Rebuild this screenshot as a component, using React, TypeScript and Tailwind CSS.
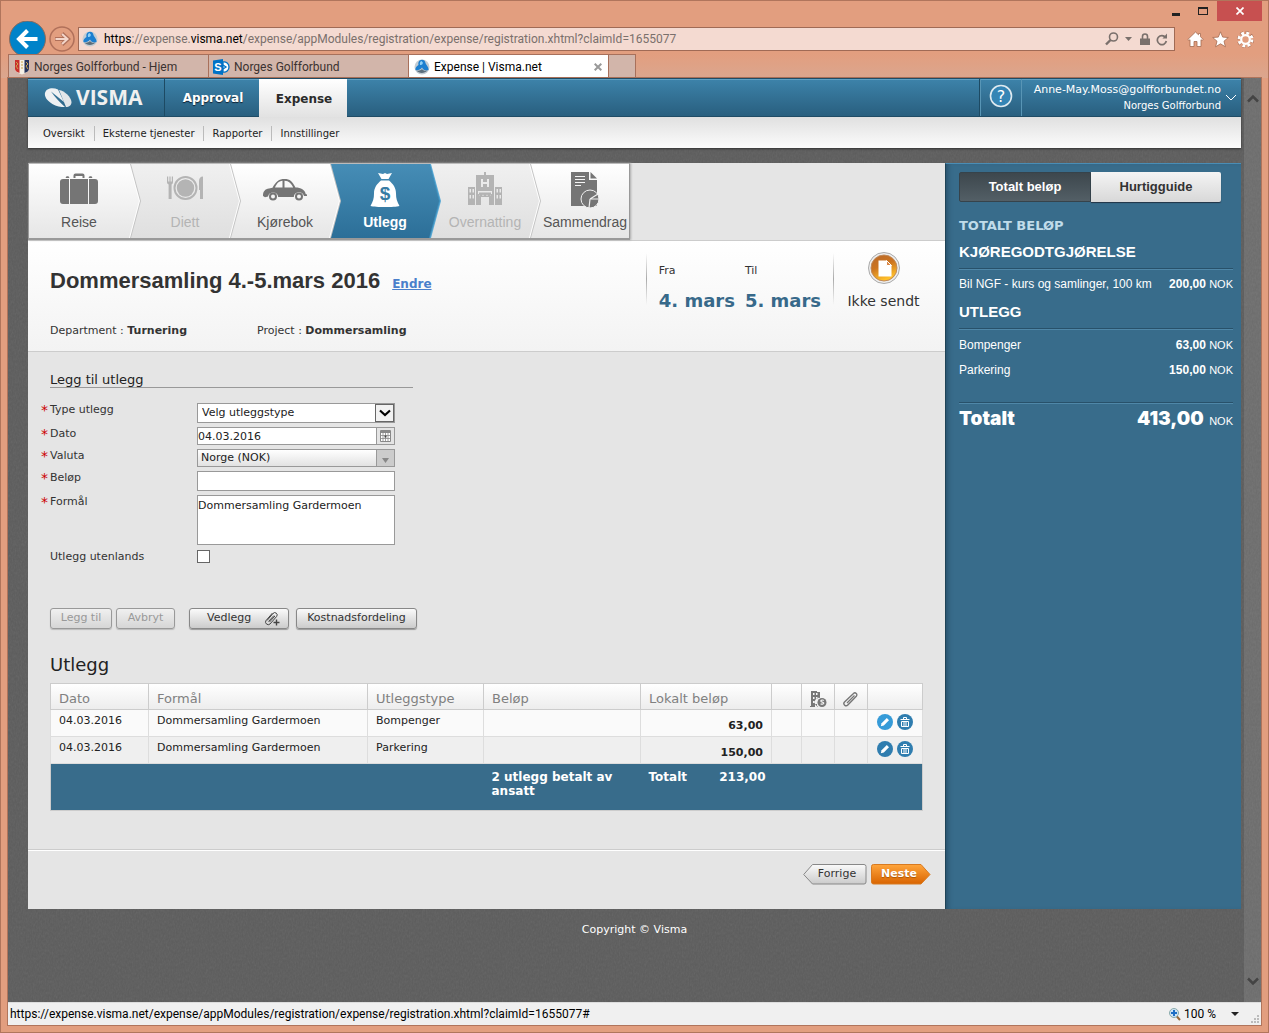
import type { ReactNode } from 'react'
import { clsx } from 'clsx'

type Step = { label: string; state: 'open' | 'off' | 'active'; icon: ReactNode }

const suitcase = (
  <svg width="40" height="36" viewBox="0 0 40 36" fill="currentColor" aria-hidden="true">
    <path d="M14.500 6V3.500a2 2 0 0 1 2-2h7a2 2 0 0 1 2 2V6h-2V4h-7v2z" />
    <path d="M6.500 6l1-1.800h2l1 1.800zM29.500 6l1-1.800h2l1 1.800z" />
    <path d="M4 7h6v25H4a3 3 0 0 1-3-3V10a3 3 0 0 1 3-3zM11 7h18v25H11zM30 7h6a3 3 0 0 1 3 3v19a3 3 0 0 1-3 3h-6z" />
  </svg>
)

const plate = (
  <svg width="40" height="36" viewBox="0 0 40 36" fill="currentColor" aria-hidden="true">
    <path d="M2 4.500h1.200v5h1.200v-5h1.200v5h1.200v-5H8V10c0 1.500-.8 2-1.400 2.500V27h-3V12.500C2.800 12 2 11.500 2 10z" />
    <circle cx="20.500" cy="16" r="11" fill="none" stroke="currentColor" strokeWidth="2" />
    <circle cx="20.500" cy="16" r="8.700" />
    <path d="M38 4.500V27h-3v-9h-1V9c0-2.500 1.500-4.500 4-4.500z" />
  </svg>
)

const car = (
  <svg width="46" height="36" viewBox="0 0 46 36" fill="currentColor" aria-hidden="true">
    <path
      fillRule="evenodd"
      d="M1 23c.2-3.500 2-6 6-6.500l3.500-.8C14 9.500 17 7 22.500 7c5.500 0 8 2.500 11 8.500 5.500 0 9.500 2.500 10.200 6.500L45 22.500V24h-3a5.200 5.200 0 0 0-10.200 1H16.200A5.200 5.200 0 0 0 6 24.500L3 25.200 1 24zM13 15.500h7.500V8.800c-4 .3-5.800 3-7.500 6.700zm9.500 0h8.700c-2-4-4-6.500-8.700-6.700z"
    />
    <circle cx="11" cy="24.500" r="3" fill="none" stroke="currentColor" strokeWidth="2" />
    <circle cx="37" cy="24.500" r="3" fill="none" stroke="currentColor" strokeWidth="2" />
  </svg>
)

const moneyBag = (
  <svg width="30" height="36" viewBox="0 0 30 36" fill="currentColor" aria-hidden="true">
    <path d="M8 1l5 1 2-1 2 1 5-1-3.500 6h-7z" />
    <path d="M11 8.500h8c4 3.500 7 7 7 13 0 5 1 8 3.500 12.500-5 1.400-24 1.400-29 0C3 29.500 4 26.500 4 21.500c0-6 3-9.500 7-13z" />
    <text x="15" y="28" textAnchor="middle" fontSize="19" fontWeight="bold" fill="#377ba4" fontFamily="Liberation Sans, sans-serif">$</text>
  </svg>
)

const hotel = (
  <svg width="36" height="36" viewBox="0 0 36 36" fill="currentColor" aria-hidden="true">
    <path
      fillRule="evenodd"
      d="M17 0h2v3h8v30h-5v-8h-8v8H9V3h8zM14 7v8h2v-3h4v3h2V7h-2v3h-4V7zM11 19v3h1.500v2h11v-2H25v-3z"
    />
    <path fillRule="evenodd" d="M1 15h7v18H1zm1.500 2v3.500H4V17zm3 0v3.500H7V17zm-3 6v3.500H4V23zm3 0v3.500H7V23zM28 15h7v18h-7zm1.500 2v3.500H31V17zm3 0v3.500H34V17zm-3 6v3.500H31V23zm3 0v3.500H34V23z" />
    <path d="M12 20.500h12v1.500a2 2 0 0 1-4 .3 2 2 0 0 1-4 0 2 2 0 0 1-4-.3z" />
  </svg>
)

const report = (
  <svg width="32" height="38" viewBox="0 0 32 38" fill="currentColor" aria-hidden="true">
    <path d="M2 1h18v8h8v26H2z" />
    <path d="M21.500 1l6.500 6.500h-6.500z" />
    <path d="M6 5.500h10M6 8.500h10M6 11.500h10M6 14.500h6" stroke="#f4f4f4" strokeWidth="1.200" />
    <circle cx="21" cy="28" r="9" stroke="#f0f0f0" />
    <path d="M21 28l8-5M21 28h9.500M21 28l-1 9" stroke="#f0f0f0" strokeWidth="1.200" fill="none" />
  </svg>
)

const steps: Step[] = [
  { label: 'Reise', state: 'open', icon: suitcase },
  { label: 'Diett', state: 'off', icon: plate },
  { label: 'Kjørebok', state: 'open', icon: car },
  { label: 'Utlegg', state: 'active', icon: moneyBag },
  { label: 'Overnatting', state: 'off', icon: hotel },
  { label: 'Sammendrag', state: 'open', icon: report },
]

const stackOrder = ['z-[6]', 'z-[5]', 'z-[4]', 'z-[3]', 'z-[2]', 'z-[1]']

const stepColor = {
  open: 'text-[#555]',
  off: 'text-[#b4b4b4]',
  active: 'font-bold text-white',
}

const iconColor = {
  open: 'text-[#757575]',
  off: 'text-[#b4b4b4]',
  active: 'text-white',
}

const rows = [
  { date: '04.03.2016', purpose: 'Dommersamling Gardermoen', type: 'Bompenger', amount: '63,00' },
  { date: '04.03.2016', purpose: 'Dommersamling Gardermoen', type: 'Parkering', amount: '150,00' },
]

function VismaBall() {
  return (
    <svg width="16" height="16" viewBox="0 0 16 16" className="shrink-0" aria-hidden="true">
      <circle cx="8" cy="8" r="7.500" fill="#c3ccd3" />
      <path d="M8 .8C5 1 4 3.500 4.500 6 2.500 7 1 9 1.500 11c2 .8 5-.2 6.500-2.500 1 2.500 4 3.500 6.500 2.500C15 8 12 6 11.500 4 11 2 10 .8 8 .8z" fill="#1c7fd0" />
      <path d="M7.500 2C6 2.500 5.500 4 6 6c2 .4 3-1 2.800-2.500z" fill="#8fd0f7" />
      <path d="M2.500 11.500c2 3 8 3.500 11 0-2.500.8-4.500.2-5.500-1.500-1.300 1.500-3.500 2-5.500 1.500z" fill="#5b6e7c" />
    </svg>
  )
}

function WindowChrome() {
  return (
    <header className="bg-[#e29e7f] font-['Roboto','Noto_Sans',sans-serif] text-xs text-black">
      <div className="flex h-5 items-stretch justify-end pr-1.5">
        <button type="button" aria-label="Minimer" className="flex w-[27px] items-center justify-center">
          <span className="mt-1.5 h-[3px] w-2 bg-[#222]" />
        </button>
        <button type="button" aria-label="Maksimer" className="flex w-7 items-center justify-center">
          <span className="h-2 w-2.5 border border-t-2 border-[#222]" />
        </button>
        <button type="button" aria-label="Lukk" className="flex w-[45px] items-center justify-center bg-[#c75050] text-white">
          <svg width="8" height="8" viewBox="0 0 8 8" aria-hidden="true">
            <path d="M.5 .5l7 7M7.500 .5l-7 7" stroke="currentColor" strokeWidth="1.700" />
          </svg>
        </button>
      </div>

      <div className="flex h-[33px] items-center overflow-hidden pt-[3px] pr-3.5 pl-2">
        <button type="button" aria-label="Tilbake" className="shrink-0">
          <svg width="37" height="37" viewBox="0 0 37 37" className="block" aria-hidden="true">
            <circle cx="18.500" cy="18" r="18" fill="#0083c9" stroke="#8a6a5c" />
            <path d="M28.500 18H10.500M18.500 9.500L10 18l8.500 8.500" fill="none" stroke="#fff" strokeWidth="4" />
          </svg>
        </button>
        <button type="button" aria-label="Frem" className="ml-0.5 shrink-0">
          <svg width="28" height="28" viewBox="0 0 28 28" className="block" aria-hidden="true">
            <circle cx="14" cy="14" r="12" fill="none" stroke="#b0705a" strokeWidth="1.500" />
            <path d="M7 14h12M14 8.500l6 5.500-6 5.500" fill="none" stroke="#b0705a" strokeWidth="4" />
            <path d="M7.500 14h12M14 9l5.500 5-5.500 5" fill="none" stroke="#f3d6ca" strokeWidth="2" />
          </svg>
        </button>
        <div className="ml-0.5 flex h-6 flex-1 items-center border border-[#a06a55] bg-[#f4dad1] pr-1.5 pl-[3px] text-[#7a706c]">
          <VismaBall />
          <span className="ml-1.5 flex-1 whitespace-nowrap">
            <span className="text-black">https</span>://expense.<span className="text-black">visma.net</span>
            /expense/appModules/registration/expense/registration.xhtml?claimId=1655077
          </span>
          <button type="button" aria-label="Søk" className="flex items-center gap-1.5">
            <svg width="14" height="14" viewBox="0 0 14 14" fill="none" stroke="currentColor" aria-hidden="true">
              <circle cx="8.500" cy="5" r="4" strokeWidth="1.600" />
              <path d="M5.500 8L1 12.500" strokeWidth="2.400" />
            </svg>
            <svg width="7" height="4" viewBox="0 0 7 4" fill="currentColor" aria-hidden="true"><path d="M0 0h7L3.500 4z" /></svg>
          </button>
          <svg width="10" height="13" viewBox="0 0 10 13" className="ml-2" aria-hidden="true">
            <path d="M2.500 6V3.500a2.500 2.500 0 0 1 5 0V6" fill="none" stroke="currentColor" strokeWidth="1.600" />
            <path d="M0 5.500h10V12H0z" fill="currentColor" />
          </svg>
          <button type="button" aria-label="Oppdater" className="ml-1.5">
            <svg width="12" height="13" viewBox="0 0 12 13" aria-hidden="true">
              <path d="M9.500 4.500A4.500 4.500 0 1 0 10.300 8" fill="none" stroke="currentColor" strokeWidth="1.700" />
              <path d="M6.500 5.500h4.500V.5z" fill="currentColor" />
            </svg>
          </button>
        </div>
        <div className="ml-3 flex items-center gap-2 text-white">
          <button type="button" aria-label="Hjem">
            <svg width="17" height="17" viewBox="0 0 17 17" className="block" aria-hidden="true">
              <path d="M8.500 1L.8 8.500l1.200 1 1-.8V15.500h4v-5h3v5h4V8.700l1 .8 1.200-1L13.500 5.700V2.500h-2v1.300z" fill="#fff" stroke="#a5694f" strokeWidth=".8" />
            </svg>
          </button>
          <button type="button" aria-label="Favoritter">
            <svg width="17" height="17" viewBox="0 0 17 17" className="block" aria-hidden="true">
              <path d="M8.500 .8l2.200 5.300 5.600.4-4.300 3.700 1.400 5.600-4.900-3-4.900 3L5 10.200.7 6.500l5.600-.4z" fill="#fff" stroke="#a5694f" strokeWidth=".8" />
            </svg>
          </button>
          <button type="button" aria-label="Verktøy">
            <svg width="17" height="17" viewBox="0 0 17 17" className="block" aria-hidden="true">
              <circle cx="8.500" cy="8.500" r="6.700" fill="none" stroke="#a5694f" strokeWidth="3.600" strokeDasharray="3 2.260" />
              <circle cx="8.500" cy="8.500" r="6.500" fill="none" stroke="#fff" strokeWidth="3" strokeDasharray="2.800 2.300" />
              <circle cx="8.500" cy="8.500" r="4.300" fill="none" stroke="#fff" strokeWidth="2.200" />
            </svg>
          </button>
        </div>
      </div>

      <div className="flex h-6 items-stretch bg-linear-to-b from-[#e29e7f] to-[#dba68e] pl-[7px] text-[#3b3230]">
        <a href="#hjem" className="flex w-[201px] items-center gap-1 border border-b-0 border-[#a8705b] bg-[#d2b5aa] pl-[5px]">
          <svg width="16" height="16" viewBox="0 0 16 16" className="shrink-0" aria-hidden="true">
            <path d="M1 1h14v9c0 3-4 4-7 5.500C5 14 1 13 1 10z" fill="#f5f0e6" />
            <path d="M1 1h4.500v13C3 13 1 12 1 10z" fill="#c9302c" />
            <path d="M10.500 1H15v9c0 2-2 3-4.500 4z" fill="#27335c" />
            <path d="M2 3l2 2-2 2 2 3M12 3l2 2-2 2 2 3M7 3h2M7 6h2M7 9h2" stroke="#c9a24a" fill="none" />
          </svg>
          Norges Golfforbund - Hjem
        </a>
        <a href="#forbund" className="flex w-[199px] items-center gap-1 border-t border-[#a8705b] bg-[#d2b5aa] pl-1">
          <svg width="17" height="16" viewBox="0 0 17 16" className="shrink-0" aria-hidden="true">
            <path d="M10 3a5 5 0 0 1 6 5 5 5 0 0 1-6 5z" fill="#fff" stroke="#0072c6" strokeWidth="1.300" />
            <path d="M10 6l3 2-3 2" fill="none" stroke="#0072c6" strokeWidth="1.300" />
            <path d="M0 1.500L10 0v16L0 14.500z" fill="#0072c6" />
            <text x="5" y="12" textAnchor="middle" fontSize="11" fontWeight="bold" fill="#fff" fontFamily="Liberation Sans, sans-serif">S</text>
          </svg>
          Norges Golfforbund
        </a>
        <a href="#expense" className="flex w-[201px] items-center gap-1 border border-b-0 border-[#a8705b] bg-white pr-1.5 pl-[5px] text-black">
          <VismaBall />
          <span className="flex-1">Expense | Visma.net</span>
          <svg width="8" height="8" viewBox="0 0 8 8" aria-hidden="true">
            <path d="M.7 .7l6.600 6.600M7.300 .7L.7 7.300" stroke="#999" strokeWidth="2" />
          </svg>
        </a>
        <button type="button" aria-label="Ny fane" className="w-[27px] border border-b-0 border-l-0 border-[#a8705b] bg-[#d2b5aa]" />
      </div>
    </header>
  )
}

function TopNav() {
  return (
    <div className="shadow-[0_1px_2px_#333]">
      <nav className="flex h-[39px] items-stretch border-t border-b border-[#1f4c66] bg-linear-to-b from-[#3d83aa] to-[#295f7f] text-white shadow-[inset_0_1px_0_#5fa0c2]">
        <a href="#start" aria-label="Visma" className="flex w-[137px] items-center gap-0.5 border-r border-[#1d4a63] pl-4 text-[#f0f0f0]">
          <svg width="30" height="24" viewBox="0 0 30 24" className="shrink-0" aria-hidden="true">
            <path d="M1 7C2 2 9 1 14 3.500L20 16 7 5.500c4 6 9 11 14 15.500C12 22-.5 14 1 7z" fill="#eef1f3" />
            <path d="M15 4c6 1 12 7 12.500 12 .2 3-2.500 5-5.500 5z" fill="#e2e6e9" />
          </svg>
          <span className="font-['Open_Sans',sans-serif] text-[21px] leading-none font-bold">VISMA</span>
        </a>
        <a href="#approval" className="flex w-[94px] items-center justify-center pt-px pl-0.5 text-xs font-bold [text-shadow:0_1px_1px_#123]">Approval</a>
        <a href="#expense" className="-mb-px flex w-[88px] items-center justify-center bg-linear-to-b from-white to-[#e2e2e2] pt-0.5 pl-0.5 text-xs font-bold text-[#2b2b2b]">Expense</a>
        <div className="flex-1" />
        <button type="button" aria-label="Hjelp" className="flex w-[42px] items-center justify-center border-x border-[#5895b5] shadow-[-1px_0_0_#1d4a63]">
          <svg width="24" height="24" viewBox="0 0 24 24" className="mb-1" aria-hidden="true">
            <circle cx="12" cy="12" r="10.500" fill="#3585b5" stroke="#dfeaf0" strokeWidth="1.600" />
            <text x="12" y="18" textAnchor="middle" fontSize="16" fill="#fff" fontFamily="DejaVu Sans, sans-serif">?</text>
          </svg>
        </button>
        <button type="button" className="flex items-center gap-1 pr-1 pl-3">
          <span className="flex flex-col text-right">
            <span className="text-[11px] leading-[17px]">Anne-May.Moss@golfforbundet.no</span>
            <span className="text-[10px] leading-4">Norges Golfforbund</span>
          </span>
          <svg width="12" height="8" viewBox="0 0 12 8" aria-hidden="true">
            <path d="M1 1l5 5 5-5" fill="none" stroke="#fff" />
          </svg>
        </button>
      </nav>
      <nav className="flex h-[31px] items-center divide-x divide-[#bbb] bg-linear-to-b from-[#e0e0e0] to-[#fcfcfc] pt-0.5 pl-1.5 text-[10px] text-[#222]">
        <a href="#oversikt" className="px-[9px]">Oversikt</a>
        <a href="#tjenester" className="px-2">Eksterne tjenester</a>
        <a href="#rapporter" className="px-[9px]">Rapporter</a>
        <a href="#innstillinger" className="px-2">Innstillinger</a>
      </nav>
    </div>
  )
}

function StepBar() {
  return (
    <div className="flex border-b border-[#ccc]">
      <ol className="flex h-[77px] border border-b-2 border-[#999] border-t-[#bbb] shadow-[1px_0_2px_#aaa]">
        {steps.map((step, i) => {
          const last = i === steps.length - 1
          return (
            <li key={step.label} className={clsx('relative w-[100px]', stackOrder[i])}>
              <svg
                width={last ? 100 : 112}
                height="74"
                viewBox={last ? '0 0 100 74' : '0 0 112 74'}
                className="absolute top-0 left-0"
                aria-hidden="true"
              >
                <defs>
                  <linearGradient id={`step${i}`} x1="0" y1="0" x2="0" y2="1">
                    <stop offset="0" stopColor={step.state === 'active' ? '#468db6' : step.state === 'off' ? '#f0f0f0' : '#ffffff'} />
                    <stop offset="1" stopColor={step.state === 'active' ? '#2c6f98' : step.state === 'off' ? '#dfdfdf' : '#e6e6e6'} />
                  </linearGradient>
                </defs>
                {last ? (
                  <path d="M0 0H100V74H0z" fill={`url(#step${i})`} />
                ) : (
                  <>
                    <path d="M0 0H102L112 37L102 74H0z" fill={step.state === 'active' ? '#5aa9d4' : '#c4c4c4'} />
                    <path d="M0 0H101L111 37L101 74H0z" fill={step.state === 'active' ? '#3d8ebb' : '#fff'} />
                    <path d="M0 0H100L110 37L100 74H0z" fill={`url(#step${i})`} />
                  </>
                )}
              </svg>
              <a href={`#${step.label}`} className={clsx('relative flex h-full flex-col items-center font-["Liberation_Sans",Arial,sans-serif] text-sm', i > 0 && 'pl-3', stepColor[step.state])}>
                <span className={clsx('flex h-12 items-center pt-1', iconColor[step.state])}>{step.icon}</span>
                <span className="leading-5">{step.label}</span>
              </a>
            </li>
          )
        })}
      </ol>
    </div>
  )
}

function ClaimHeader() {
  return (
    <section className="flex h-[111px] items-start justify-between border-b border-[#ccc] bg-linear-to-b from-white to-[#f3f3f3] pr-6 pl-[22px]">
      <div className="pt-[26px]">
        <div className="flex items-baseline gap-3">
          <h1 className="font-['Liberation_Sans',Arial,sans-serif] text-[22px] leading-7 font-bold text-[#333]">Dommersamling 4.-5.mars 2016</h1>
          <a href="#endre" className="text-xs font-bold text-[#4a7fcb] underline">Endre</a>
        </div>
        <div className="mt-7 flex text-[11px] text-[#333]">
          <p className="w-[207px]">Department : <b>Turnering</b></p>
          <p>Project : <b>Dommersamling</b></p>
        </div>
      </div>
      <div className="flex">
        <div className="mt-3 h-[52px] w-px bg-linear-to-b from-transparent via-[#aaa] to-transparent" />
        <dl className="flex gap-2.5 px-3 pt-5 text-[11px] text-[#333]">
          <div>
            <dt className="leading-5">Fra</dt>
            <dd className="mt-1.5 text-lg leading-7 font-bold text-[#37698a]">4. mars</dd>
          </div>
          <div>
            <dt className="leading-5">Til</dt>
            <dd className="mt-1.5 text-lg leading-7 font-bold text-[#37698a]">5. mars</dd>
          </div>
        </dl>
        <div className="mt-3 h-[52px] w-px bg-linear-to-b from-transparent via-[#aaa] to-transparent" />
        <div className="ml-3 flex w-[75px] flex-col items-center pt-2.5">
          <svg width="34" height="34" viewBox="0 0 34 34" aria-hidden="true">
            <defs>
              <linearGradient id="status" x1="0" y1="0" x2=".4" y2="1">
                <stop offset="0" stopColor="#b8692b" />
                <stop offset=".5" stopColor="#cc7420" />
                <stop offset="1" stopColor="#ffc02a" />
              </linearGradient>
            </defs>
            <circle cx="17" cy="17" r="15.500" fill="#eee" stroke="#aaa" />
            <circle cx="17" cy="17" r="13" fill="url(#status)" stroke="#c0895a" />
            <path d="M11.500 9.500h8l5 5v11h-13z" fill="#fff" />
            <path d="M19.500 9.500v5h5z" fill="#d9894a" stroke="#fff" />
          </svg>
          <p className="mt-1.5 text-sm text-[#333]">Ikke sendt</p>
        </div>
      </div>
    </section>
  )
}

function Label({ htmlFor, required, children }: { htmlFor: string; required?: boolean; children: ReactNode }) {
  return (
    <label htmlFor={htmlFor} className="flex w-[156px] shrink-0 pt-px leading-3">
      <span className="w-[9px] text-sm leading-3 text-[#c00]">{required && '*'}</span>
      {children}
    </label>
  )
}

const field = 'w-[198px] rounded-none border border-[#999] bg-white text-[11px] text-[#222]'

function ExpenseForm() {
  return (
    <form className="pt-5 pl-[22px] text-[11px] text-[#333]">
      <h2 className="w-[363px] border-b border-[#999] text-[13px] leading-[15px] text-[#222]">Legg til utlegg</h2>

      <div className="mt-[15px] -ml-[9px] flex flex-col">
        <div className="flex h-6">
          <Label htmlFor="type" required>Type utlegg</Label>
          <div className="relative">
            <select id="type" className={clsx(field, 'h-5 appearance-none pl-1')}>
              <option>Velg utleggstype</option>
            </select>
            <span className="pointer-events-none absolute top-px right-px flex h-[18px] w-[19px] items-center justify-center border border-[#666] bg-[#f2f2f2]">
              <svg width="12" height="8" viewBox="0 0 12 8" aria-hidden="true">
                <path d="M1 1.500l5 4.500 5-4.500" fill="none" stroke="#000" strokeWidth="2.200" />
              </svg>
            </span>
          </div>
        </div>
        <div className="flex h-[22px]">
          <Label htmlFor="dato" required>Dato</Label>
          <div className="relative">
            <input id="dato" type="text" defaultValue="04.03.2016" className={clsx(field, 'h-[18px]')} />
            <button type="button" aria-label="Velg dato" className="absolute top-px right-px flex h-4 w-[18px] items-center justify-center border-l border-[#999] bg-[#e4e4e4]">
              <svg width="11" height="12" viewBox="0 0 11 12" aria-hidden="true">
                <path d="M.5 .5h10v11H.5z" fill="#fff" stroke="#888" />
                <path d="M0 2h11" stroke="#888" strokeWidth="2" />
                <path d="M3 3v8M5.500 3v8M8 3v8M1 5.500h9M1 8.500h9" stroke="#888" strokeWidth=".8" />
                <path d="M4.500 5.500h2v2h-2z" fill="#444" />
              </svg>
            </button>
          </div>
        </div>
        <div className="flex h-[22px]">
          <Label htmlFor="valuta" required>Valuta</Label>
          <div className="relative">
            <select id="valuta" className={clsx(field, 'h-[18px] appearance-none bg-linear-to-b from-white to-[#e2e2e2] pl-[3px]')}>
              <option>Norge (NOK)</option>
            </select>
            <span className="pointer-events-none absolute top-px right-px flex h-4 w-[18px] items-end justify-center border-l border-[#999] bg-[#ccc] pb-[3px]">
              <svg width="7" height="5" viewBox="0 0 7 5" aria-hidden="true"><path d="M0 0h7L3.500 5z" fill="#888" /></svg>
            </span>
          </div>
        </div>
        <div className="flex h-6">
          <Label htmlFor="belop" required>Beløp</Label>
          <input id="belop" type="text" className={clsx(field, 'h-5')} />
        </div>
        <div className="flex h-[55px]">
          <Label htmlFor="formal" required>Formål</Label>
          <textarea id="formal" defaultValue="Dommersamling Gardermoen" className={clsx(field, 'h-[50px] resize-none pt-0.5 leading-[15px]')} />
        </div>
        <div className="flex">
          <Label htmlFor="utenlands">Utlegg utenlands</Label>
          <input id="utenlands" type="checkbox" className="size-[13px] appearance-none border border-[#666] bg-white" />
        </div>
      </div>

      <div className="mt-[45px] flex text-[#333]">
        <button type="button" disabled className="h-[21px] w-[62px] rounded-[3px] border border-[#999] bg-linear-to-b from-[#f0f0f0] to-[#d6d6d6] text-[#999] shadow-[0_1px_1px_#bbb]">Legg til</button>
        <button type="button" disabled className="ml-1 h-[21px] w-[59px] rounded-[3px] border border-[#999] bg-linear-to-b from-[#f0f0f0] to-[#d6d6d6] text-[#999] shadow-[0_1px_1px_#bbb]">Avbryt</button>
        <button type="button" className="ml-3.5 flex h-[21px] w-[100px] items-center justify-between rounded-[3px] border border-[#888] bg-linear-to-b from-[#fafafa] to-[#ccc] pr-[7px] pl-[17px] shadow-[0_1px_1px_#999]">
          Vedlegg
          <svg width="17" height="15" viewBox="0 0 17 15" fill="none" stroke="#444" aria-hidden="true">
            <path d="M3 9.500L9 2.500a2.300 2.300 0 0 1 3.600 3L6 13a2.700 2.700 0 0 1-4.200-3.200L8.500 2M4.500 10.500L10 4.500M5.500 11L11 5" />
            <path d="M12.500 8.500v6M9.500 11.500h6" strokeWidth="1.400" />
          </svg>
        </button>
        <button type="button" className="ml-[7px] h-[21px] w-[121px] rounded-[3px] border border-[#888] bg-linear-to-b from-[#fafafa] to-[#ccc] shadow-[0_1px_1px_#999]">Kostnadsfordeling</button>
      </div>
    </form>
  )
}

function RowActions({ lit, date }: { lit: boolean; date: string }) {
  return (
    <div className="flex gap-1 pt-1">
      <button type="button" aria-label={`Rediger ${date}`}>
        <svg width="16" height="16" viewBox="0 0 16 16" className="block" aria-hidden="true">
          <circle cx="8" cy="8" r="8" fill={lit ? '#369bd8' : '#2f7daf'} />
          <path d="M3.800 12.200l.8-3L9.800 4l2.200 2.200-5.200 5.200z" fill="#fff" />
        </svg>
      </button>
      <button type="button" aria-label={`Slett ${date}`}>
        <svg width="16" height="16" viewBox="0 0 16 16" className="block" aria-hidden="true">
          <circle cx="8" cy="8" r="8" fill="#2f7daf" />
          <path d="M3.500 5.500h9M6.500 5V3.500h3V5M4.500 7.500h7v5h-7zM7 7.500v5M9 7.500v5" fill="none" stroke="#fff" />
        </svg>
      </button>
    </div>
  )
}

function ExpenseTable() {
  return (
    <section className="px-[22px] pt-6 pb-[38px]">
      <h2 className="text-lg leading-6 text-[#222]">Utlegg</h2>
      <table className="mt-1.5 w-full table-fixed border-collapse border border-[#ccc] text-left text-[11px] leading-[14px] text-[#222]">
        <colgroup>
          <col className="w-[98px]" />
          <col />
          <col className="w-[116px]" />
          <col className="w-[157px]" />
          <col className="w-[131px]" />
          <col className="w-[30px]" />
          <col className="w-[33px]" />
          <col className="w-[33px]" />
          <col className="w-[55px]" />
        </colgroup>
        <thead>
          <tr className="h-[26px] bg-linear-to-b from-white to-[#ececec] text-[13px] text-[#808080] [&>th]:border [&>th]:border-[#ccc] [&>th]:pt-[5px] [&>th]:pl-2 [&>th]:font-normal">
            <th>Dato</th>
            <th>Formål</th>
            <th>Utleggstype</th>
            <th>Beløp</th>
            <th>Lokalt beløp</th>
            <th />
            <th>
              <svg width="17" height="17" viewBox="0 0 17 17" className="block" role="img" aria-label="Kostnadsfordeling">
                <path fillRule="evenodd" d="M1 0h6v1h3v6a4 4 0 0 0-2 8.500V16H7v-3H5v3H0v-1h1zM3 2v2h1.500V2zm3 0v2h1.500V2zM3 6v2h1.500V6zm3 0v2h1.500V6zM3 10v2h1.500v-2z" fill="#777" />
                <circle cx="12" cy="11.500" r="4.500" fill="#777" />
                <path d="M13.800 9.500c-1-.8-3-.6-3 .6s3 .8 3 2-2 1.400-3.200.6" fill="none" stroke="#f2f2f2" strokeWidth="1.200" />
              </svg>
            </th>
            <th>
              <svg width="15" height="15" viewBox="0 0 15 15" fill="none" stroke="#777" className="block" role="img" aria-label="Vedlegg">
                <path d="M1.500 10L10.500 1.500a1.900 1.900 0 0 1 2.800 2.700L4.800 13a2 2 0 0 1-3.300-3z" strokeWidth="1.400" />
                <path d="M4 11L11.500 3.500" strokeWidth="1.300" />
              </svg>
            </th>
            <th />
          </tr>
        </thead>
        <tbody>
          {rows.map((row, i) => (
            <tr
              key={row.type}
              className={clsx('h-[27px] align-top [&>td]:border [&>td]:border-[#ddd] [&>td]:pt-1 [&>td]:pl-2', i % 2 ? 'bg-[#efefef]' : 'bg-[#fafafa]')}
            >
              <td>{row.date}</td>
              <td>{row.purpose}</td>
              <td>{row.type}</td>
              <td />
              <td className="pr-2 text-right font-bold"><span className="block pt-[5px]">{row.amount}</span></td>
              <td />
              <td />
              <td />
              <td className="pt-0! pl-[9px]!"><RowActions lit={i === 0} date={row.date} /></td>
            </tr>
          ))}
        </tbody>
        <tfoot>
          <tr className="h-[47px] bg-[#386c8b] align-top text-xs leading-[14px] font-bold text-white [&>td]:pt-1.5 [&>td]:pl-2">
            <td colSpan={3} />
            <td>2 utlegg betalt av ansatt</td>
            <td>
              <span className="flex justify-between pr-1.5"><span>Totalt</span><span>213,00</span></span>
            </td>
            <td colSpan={4} />
          </tr>
        </tfoot>
      </table>
    </section>
  )
}

function PagerButtons() {
  return (
    <div className="flex gap-1 border-t border-[#ccc] pt-[13px] pr-3.5 pb-6 text-[11px] shadow-[inset_0_1px_0_#fff]">
      <button type="button" className="relative ml-auto h-[22px] w-16 pl-1 text-[#333]">
        <svg width="64" height="23" viewBox="0 0 64 23" className="absolute inset-0" aria-hidden="true">
          <defs>
            <linearGradient id="prev" x1="0" y1="0" x2="0" y2="1">
              <stop offset="0" stopColor="#fafafa" />
              <stop offset="1" stopColor="#cbcbcb" />
            </linearGradient>
          </defs>
          <path d="M9.500 1.500H61a2 2 0 0 1 2 2V19a2 2 0 0 1-2 2H9.500L.7 11.500z" fill="url(#prev)" stroke="#888" />
        </svg>
        <span className="relative">Forrige</span>
      </button>
      <button type="button" className="relative h-[22px] w-[60px] pr-1 font-bold text-white [text-shadow:0_1px_1px_#a50]">
        <svg width="60" height="23" viewBox="0 0 60 23" className="absolute inset-0" aria-hidden="true">
          <defs>
            <linearGradient id="next" x1="0" y1="0" x2="0" y2="1">
              <stop offset="0" stopColor="#ffa53c" />
              <stop offset="1" stopColor="#d96400" />
            </linearGradient>
          </defs>
          <path d="M2.500 1.500H50l9 10L50 21H2.500a2 2 0 0 1-2-2V3.500a2 2 0 0 1 2-2z" fill="url(#next)" stroke="#d87a20" />
        </svg>
        <span className="relative">Neste</span>
      </button>
    </div>
  )
}

function Amount({ value }: { value: string }) {
  return (
    <span className="shrink-0 whitespace-nowrap">
      <b>{value}</b> <span className="text-[11px]">NOK</span>
    </span>
  )
}

function TotalsPanel() {
  return (
    <aside className="w-[296px] shrink-0 border-t border-t-[#4a8db5] border-l border-l-[#1f4356] bg-[#386c8b] pr-2 pl-[13px] font-['Liberation_Sans',Arial,sans-serif] text-xs text-white shadow-[inset_5px_0_5px_-3px_#28506a]">
      <div role="tablist" className="mt-2 mr-3 flex h-[30px] text-[13px] font-bold">
        <button type="button" role="tab" aria-selected="true" className="flex-1 rounded-l-xs border border-[#36434b] bg-linear-to-b from-[#3d474d] to-[#535f66]">Totalt beløp</button>
        <button type="button" role="tab" aria-selected="false" className="flex-1 rounded-r-xs bg-linear-to-b from-[#f4f4f4] to-[#d8d8d8] text-[#333] shadow-[0_1px_1px_#234]">Hurtigguide</button>
      </div>
      <h2 className="mt-4 font-['DejaVu_Sans',Verdana,sans-serif] text-[13px] leading-4 font-bold text-[#c0dcea]">TOTALT BELØP</h2>
      <h3 className="mt-[9px] border-b border-[#28516a] pb-[7px] text-[15px] leading-[18px] font-bold shadow-[0_1px_0_#4f87a8]">KJØREGODTGJØRELSE</h3>
      <div className="flex justify-between pt-[7px] leading-4">
        <span>Bil NGF - kurs og samlinger, 100 km</span>
        <Amount value="200,00" />
      </div>
      <h3 className="mt-[11px] border-b border-[#28516a] pb-[7px] text-[15px] leading-[18px] font-bold shadow-[0_1px_0_#4f87a8]">UTLEGG</h3>
      <div className="flex justify-between pt-2 leading-4">
        <span>Bompenger</span>
        <Amount value="63,00" />
      </div>
      <div className="flex justify-between border-b border-[#28516a] pt-[9px] pb-6 leading-4 shadow-[0_1px_0_#4f87a8]">
        <span>Parkering</span>
        <Amount value="150,00" />
      </div>
      <div className="flex items-baseline justify-between pt-1">
        <span className="font-['Inter',sans-serif] text-[19px] leading-6 font-black">Totalt</span>
        <span className="whitespace-nowrap">
          <span className="mr-0.5 font-['Inter',sans-serif] text-[19px] leading-6 font-black">413,00</span> <span className="text-[11px]">NOK</span>
        </span>
      </div>
    </aside>
  )
}

export default function App() {
  return (
    <div className="flex min-h-screen flex-col border border-[#b0755c] bg-[#e29e7f] pb-1.5 font-['DejaVu_Sans',Verdana,sans-serif]">
      <WindowChrome />

      <div className="mx-1.5 -mt-px flex flex-1 flex-col border border-[#b0755c]">
        <div className="relative isolate flex flex-1 bg-[#5c5c5c]">
          <svg className="absolute inset-0 -z-10 size-full opacity-10" aria-hidden="true">
            <filter id="grain">
              <feTurbulence type="fractalNoise" baseFrequency="0.7 0.35" numOctaves="2" />
              <feColorMatrix type="saturate" values="0" />
            </filter>
            <rect width="100%" height="100%" filter="url(#grain)" />
          </svg>

          <div className="min-w-0 flex-1 pr-[3px] pl-5">
            <TopNav />
            <main className="mt-[15px] flex">
              <div className="min-w-0 flex-1 bg-[#e5e5e5]">
                <StepBar />
                <ClaimHeader />
                <ExpenseForm />
                <ExpenseTable />
                <PagerButtons />
              </div>
              <TotalsPanel />
            </main>
            <footer className="py-3 text-center text-[11px] leading-[18px] text-white">Copyright © Visma</footer>
          </div>

          <div className="flex w-[17px] shrink-0 flex-col items-center justify-between bg-white/10 py-4 text-[#444]">
            <svg width="12" height="9" viewBox="0 0 12 9" aria-hidden="true">
              <path d="M1 7.500l5-5 5 5" fill="none" stroke="currentColor" strokeWidth="2.500" />
            </svg>
            <svg width="12" height="9" viewBox="0 0 12 9" aria-hidden="true">
              <path d="M1 1.500l5 5 5-5" fill="none" stroke="currentColor" strokeWidth="2.500" />
            </svg>
          </div>
        </div>

        <div className="flex h-[23px] items-center border-t border-[#ddd] bg-[#f0f0f0] px-0.5 font-['Roboto','Noto_Sans',sans-serif] text-xs text-black">
          <span className="flex-1">https://expense.visma.net/expense/appModules/registration/expense/registration.xhtml?claimId=1655077#</span>
          <button type="button" className="flex items-center gap-[3px]">
            <svg width="12" height="13" viewBox="0 0 12 13" aria-hidden="true">
              <path d="M7.500 8l3.500 4" stroke="#9a6a3a" strokeWidth="2" />
              <circle cx="5" cy="5" r="4.500" fill="#cfe4f5" stroke="#8aa" />
              <path d="M5 2v6M2 5h6" stroke="#1f6fc4" strokeWidth="2" />
            </svg>
            100 %
            <svg width="8" height="4" viewBox="0 0 8 4" className="ml-3" aria-hidden="true"><path d="M0 0h8L4 4z" fill="#222" /></svg>
          </button>
          <svg width="8" height="8" viewBox="0 0 8 8" className="mt-2.5 ml-3" fill="#bbb" aria-hidden="true">
            <path d="M6 0h2v2H6zM3 3h2v2H3zM6 3h2v2H6zM0 6h2v2H0zM3 6h2v2H3zM6 6h2v2H6z" />
          </svg>
        </div>
      </div>
    </div>
  )
}
